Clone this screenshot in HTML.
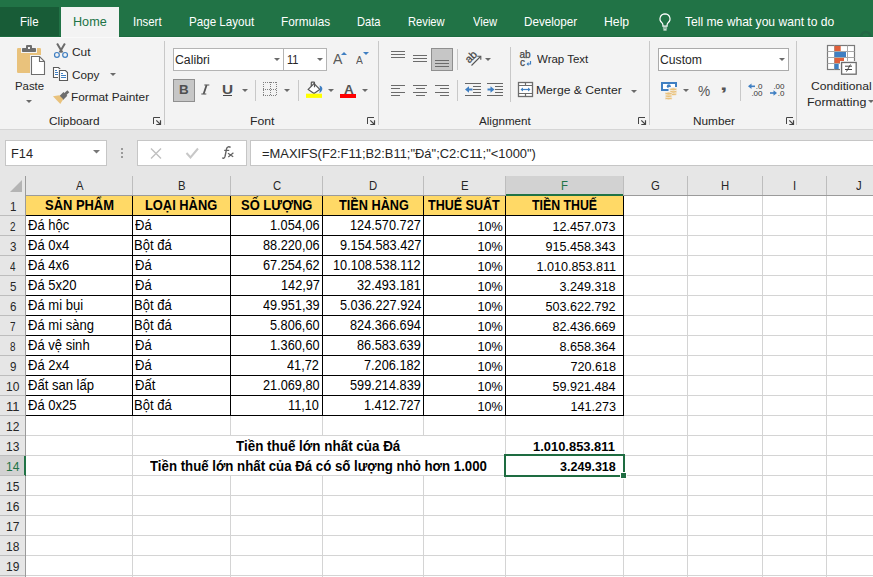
<!DOCTYPE html>
<html><head><meta charset="utf-8"><style>
html,body{margin:0;padding:0;}
body{width:873px;height:577px;overflow:hidden;position:relative;background:#fff;font-family:"Liberation Sans",sans-serif;}
body>div,body>svg{position:absolute;}
.t{white-space:nowrap;}
</style></head><body>
<div style="left:0px;top:0px;width:873px;height:37px;background:#217346"></div>
<div style="left:0px;top:36px;width:873px;height:1px;background:#1c6b40"></div>
<svg style="position:absolute;left:858px;top:28px" width="15" height="9" viewBox="0 0 15 9"><path d="M3.3 8.5A4.5 4.5 0 0 1 12.3 8.5" fill="none" stroke="#236745" stroke-width="2.6"/></svg>
<div style="left:0px;top:7px;width:59px;height:29px;background:#185c37"></div>
<div style="left:61px;top:7px;width:58px;height:30px;background:#f3f3f3"></div>
<div class="t" style="left:19.98px;top:16.29px;font-size:12.6px;line-height:12.6px;font-weight:400;color:#fff;transform-origin:0 0;transform:scaleX(0.9158);">File</div>
<div class="t" style="left:72.70px;top:16.29px;font-size:12.6px;line-height:12.6px;font-weight:400;color:#217346;transform-origin:0 0;transform:scaleX(1.0031);">Home</div>
<div class="t" style="left:132.79px;top:16.29px;font-size:12.6px;line-height:12.6px;font-weight:400;color:#fff;transform-origin:0 0;transform:scaleX(0.9065);">Insert</div>
<div class="t" style="left:188.58px;top:16.29px;font-size:12.6px;line-height:12.6px;font-weight:400;color:#fff;transform-origin:0 0;transform:scaleX(0.9214);">Page Layout</div>
<div class="t" style="left:281.06px;top:16.29px;font-size:12.6px;line-height:12.6px;font-weight:400;color:#fff;transform-origin:0 0;transform:scaleX(0.9353);">Formulas</div>
<div class="t" style="left:357.02px;top:16.29px;font-size:12.6px;line-height:12.6px;font-weight:400;color:#fff;transform-origin:0 0;transform:scaleX(0.8846);">Data</div>
<div class="t" style="left:408.01px;top:16.29px;font-size:12.6px;line-height:12.6px;font-weight:400;color:#fff;transform-origin:0 0;transform:scaleX(0.8878);">Review</div>
<div class="t" style="left:472.70px;top:16.29px;font-size:12.6px;line-height:12.6px;font-weight:400;color:#fff;transform-origin:0 0;transform:scaleX(0.8926);">View</div>
<div class="t" style="left:524.07px;top:16.29px;font-size:12.6px;line-height:12.6px;font-weight:400;color:#fff;transform-origin:0 0;transform:scaleX(0.9268);">Developer</div>
<div class="t" style="left:603.73px;top:16.29px;font-size:12.6px;line-height:12.6px;font-weight:400;color:#fff;transform-origin:0 0;transform:scaleX(0.9720);">Help</div>
<div class="t" style="left:685.00px;top:16.29px;font-size:12.6px;line-height:12.6px;font-weight:400;color:#fff;transform-origin:0 0;transform:scaleX(0.9606);">Tell me what you want to do</div>
<svg style="position:absolute;left:656px;top:11px" width="18" height="20" viewBox="0 0 18 20"><path d="M9 2.8a5 5 0 0 0-3.1 8.9c.7.6 1 1.3 1 2.2v1.3h4.2v-1.3c0-.9.3-1.6 1-2.2A5 5 0 0 0 9 2.8z" fill="none" stroke="#fff" stroke-width="1.2"/><path d="M6.9 17h4.2M7.4 18.8h3.2" stroke="#fff" stroke-width="1.2"/></svg>
<div style="left:0px;top:37px;width:873px;height:92px;background:#f3f3f3"></div>
<div style="left:0px;top:37px;width:873px;height:1px;background:#f9f9f9"></div>
<div style="left:0px;top:129px;width:873px;height:1px;background:#d5d5d5"></div>
<div style="left:164px;top:41px;width:1px;height:84px;background:#c8c8c8"></div>
<div style="left:378px;top:41px;width:1px;height:84px;background:#c8c8c8"></div>
<div style="left:649px;top:41px;width:1px;height:84px;background:#c8c8c8"></div>
<div style="left:796px;top:41px;width:1px;height:84px;background:#c8c8c8"></div>
<svg style="position:absolute;left:153px;top:117px" width="9" height="9" viewBox="0 0 9 9"><path d="M0.5 7V0.5H7" fill="none" stroke="#444" stroke-width="1"/><path d="M3.3 3.3L7 7" fill="none" stroke="#444" stroke-width="1.1"/><path d="M7.5 3.3V7.5H3.3" fill="none" stroke="#444" stroke-width="1.2"/></svg>
<svg style="position:absolute;left:367px;top:117px" width="9" height="9" viewBox="0 0 9 9"><path d="M0.5 7V0.5H7" fill="none" stroke="#444" stroke-width="1"/><path d="M3.3 3.3L7 7" fill="none" stroke="#444" stroke-width="1.1"/><path d="M7.5 3.3V7.5H3.3" fill="none" stroke="#444" stroke-width="1.2"/></svg>
<svg style="position:absolute;left:638px;top:117px" width="9" height="9" viewBox="0 0 9 9"><path d="M0.5 7V0.5H7" fill="none" stroke="#444" stroke-width="1"/><path d="M3.3 3.3L7 7" fill="none" stroke="#444" stroke-width="1.1"/><path d="M7.5 3.3V7.5H3.3" fill="none" stroke="#444" stroke-width="1.2"/></svg>
<svg style="position:absolute;left:786px;top:117px" width="9" height="9" viewBox="0 0 9 9"><path d="M0.5 7V0.5H7" fill="none" stroke="#444" stroke-width="1"/><path d="M3.3 3.3L7 7" fill="none" stroke="#444" stroke-width="1.1"/><path d="M7.5 3.3V7.5H3.3" fill="none" stroke="#444" stroke-width="1.2"/></svg>
<div class="t" style="left:48.60px;top:115.14px;font-size:11.6px;line-height:11.6px;font-weight:400;color:#262626;transform-origin:0 0;transform:scaleX(1.0204);">Clipboard</div>
<div class="t" style="left:250.35px;top:115.14px;font-size:11.6px;line-height:11.6px;font-weight:400;color:#262626;transform-origin:0 0;transform:scaleX(1.0545);">Font</div>
<div class="t" style="left:479.00px;top:115.14px;font-size:11.6px;line-height:11.6px;font-weight:400;color:#262626;transform-origin:0 0;transform:scaleX(1.0038);">Alignment</div>
<div class="t" style="left:692.98px;top:115.14px;font-size:11.6px;line-height:11.6px;font-weight:400;color:#262626;transform-origin:0 0;transform:scaleX(1.0200);">Number</div>
<svg style="position:absolute;left:14px;top:42px" width="34" height="36" viewBox="0 0 34 36">
<rect x="3" y="6" width="24" height="25" rx="1.2" fill="#e9c27c"/>
<rect x="7" y="5" width="16" height="6" fill="#f3f3f3"/>
<rect x="8" y="6" width="14" height="4" rx="0.8" fill="#6d6d6d"/>
<rect x="12" y="3" width="6" height="4" rx="1" fill="#6d6d6d"/>
<rect x="14" y="5" width="2" height="2" fill="#f3f3f3"/>
<rect x="16" y="13" width="16" height="21" fill="#f3f3f3"/>
<path d="M17.5 14.5H25.5L30.5 19.5V32.5H17.5Z" fill="#fff" stroke="#6d6d6d" stroke-width="1.1"/>
<path d="M25.5 14.5V19.5H30.5" fill="none" stroke="#6d6d6d" stroke-width="1.1"/>
</svg>
<div class="t" style="left:14.52px;top:80.14px;font-size:11.6px;line-height:11.6px;font-weight:400;color:#262626;transform-origin:0 0;transform:scaleX(0.9821);">Paste</div>
<svg style="position:absolute;left:26px;top:100px" width="6" height="4" viewBox="0 0 6 4"><path d="M0 0h6L3.0 3.0z" fill="#6a6a6a"/></svg>
<svg style="position:absolute;left:52px;top:42px" width="18" height="17" viewBox="0 0 18 17">
<path d="M5.1 1.4L10.4 10.6M12.9 1.4L7.6 10.6" stroke="#6b6b6b" stroke-width="2"/>
<circle cx="4.9" cy="12.9" r="2.4" fill="none" stroke="#3f7fc2" stroke-width="1.2"/>
<circle cx="13.1" cy="12.9" r="2.4" fill="none" stroke="#3f7fc2" stroke-width="1.2"/>
</svg>
<div class="t" style="left:72.40px;top:46.14px;font-size:11.6px;line-height:11.6px;font-weight:400;color:#262626;transform-origin:0 0;transform:scaleX(1.0278);">Cut</div>
<svg style="position:absolute;left:52px;top:66px" width="18" height="16" viewBox="0 0 18 16">
<path d="M1.5 1.5H6.5L8 3V11.5H1.5Z" fill="#fff" stroke="#5a5a5a" stroke-width="1.1"/>
<rect x="6" y="3" width="11" height="13" fill="#f3f3f3"/>
<path d="M7.5 4.5H13.5L15.5 6.5V14.5H7.5Z" fill="#fff" stroke="#5a5a5a" stroke-width="1.1"/>
<path d="M3 4.5H5M3 6.5H6M3 8.5H6M9 7.5H11M9 9.5H14M9 11.5H14" stroke="#3f7fc2" stroke-width="1"/>
</svg>
<div class="t" style="left:72.40px;top:69.14px;font-size:11.6px;line-height:11.6px;font-weight:400;color:#262626;transform-origin:0 0;transform:scaleX(1.0111);">Copy</div>
<svg style="position:absolute;left:110px;top:73px" width="6" height="4" viewBox="0 0 6 4"><path d="M0 0h6L3.0 3.0z" fill="#6a6a6a"/></svg>
<svg style="position:absolute;left:52px;top:88px" width="18" height="17" viewBox="0 0 18 17">
<path d="M12 5.5L15.3 2.2L17.3 4.2L14 7.5z" fill="#6d6d6d"/>
<path d="M7 8.5L11.5 4L15.3 7.8L10.8 12.3z" fill="#6d6d6d"/>
<path d="M1 8.3L7.3 7.3L11.2 11.2L8.3 16z" fill="#e9c27c"/>
</svg>
<div class="t" style="left:71.38px;top:91.14px;font-size:11.6px;line-height:11.6px;font-weight:400;color:#262626;transform-origin:0 0;transform:scaleX(1.0184);">Format Painter</div>
<div style="left:173px;top:48px;width:111px;height:23px;background:#fff;border:1px solid #b4b4b4;box-sizing:border-box"></div>
<div style="left:283px;top:48px;width:44px;height:23px;background:#fff;border:1px solid #b4b4b4;box-sizing:border-box"></div>
<div class="t" style="left:175.42px;top:53.88px;font-size:12.5px;line-height:12.5px;font-weight:400;color:#262626;transform-origin:0 0;transform:scaleX(0.9824);">Calibri</div>
<div class="t" style="left:286.82px;top:53.88px;font-size:12.5px;line-height:12.5px;font-weight:400;color:#262626;transform-origin:0 0;transform:scaleX(0.8833);">11</div>
<svg style="position:absolute;left:274px;top:58px" width="6" height="4" viewBox="0 0 6 4"><path d="M0 0h6L3.0 3.0z" fill="#6a6a6a"/></svg>
<svg style="position:absolute;left:317px;top:58px" width="6" height="4" viewBox="0 0 6 4"><path d="M0 0h6L3.0 3.0z" fill="#6a6a6a"/></svg>
<div class="t" style="left:333.10px;top:52.87px;font-size:13.8px;line-height:13.8px;font-weight:400;color:#595959;transform-origin:0 0;transform:scaleX(1.0222);">A</div>
<svg style="position:absolute;left:341px;top:52px" width="6" height="3" viewBox="0 0 6 3"><path d="M0 3h6L3 0z" fill="#3f7fc2"/></svg>
<div class="t" style="left:356.30px;top:55.76px;font-size:10.4px;line-height:10.4px;font-weight:400;color:#595959;transform-origin:0 0;transform:scaleX(0.9857);">A</div>
<svg style="position:absolute;left:363px;top:52px" width="6" height="3" viewBox="0 0 6 3"><path d="M0 0h6L3 3z" fill="#3f7fc2"/></svg>
<div style="left:173px;top:79px;width:22px;height:23px;background:#c6c6c6;border:1px solid #8f8f8f;box-sizing:border-box"></div>
<div class="t" style="left:178.60px;top:83.83px;font-size:12.2px;line-height:12.2px;font-weight:700;color:#505050;transform-origin:0 0;transform:scaleX(1.1000);">B</div>
<svg style="position:absolute;left:200px;top:84px" width="11" height="11" viewBox="0 0 11 11"><path d="M6.6 1L3.6 10" stroke="#555" stroke-width="1.8"/><path d="M4.3 1H9.3M1.3 10H6.3" stroke="#555" stroke-width="1.2"/></svg>
<div class="t" style="left:221.74px;top:83.83px;font-size:12.2px;line-height:12.2px;font-weight:700;color:#505050;transform-origin:0 0;transform:scaleX(1.2571);">U</div>
<div style="left:223px;top:95px;width:9px;height:1px;background:#474747"></div>
<svg style="position:absolute;left:242px;top:89px" width="6" height="4" viewBox="0 0 6 4"><path d="M0 0h6L3.0 3.0z" fill="#6a6a6a"/></svg>
<div style="left:255px;top:80px;width:1px;height:21px;background:#c8c8c8"></div>
<svg style="position:absolute;left:263px;top:82px" width="15" height="15" viewBox="0 0 15 15"><path d="M0 0.5H14M0 13.5H14M0 7.5H14M0.5 0V14M13.5 0V14M7.5 0V14" stroke="#808080" stroke-width="1" stroke-dasharray="1 1"/></svg>
<svg style="position:absolute;left:284px;top:89px" width="6" height="4" viewBox="0 0 6 4"><path d="M0 0h6L3.0 3.0z" fill="#6a6a6a"/></svg>
<div style="left:298px;top:80px;width:1px;height:21px;background:#c8c8c8"></div>
<svg style="position:absolute;left:306px;top:81px" width="18" height="17" viewBox="0 0 18 17">
<path d="M2.2 8.4L8 2.5L13.8 8.4L8 12.6Z" fill="#fff" stroke="#555" stroke-width="1.2"/>
<path d="M5.3 5.3V1.8Q5.3 1.2 5.9 1.2H7.9Q8.5 1.2 8.5 1.8V6.3" fill="none" stroke="#555" stroke-width="1.2"/>
<path d="M13.6 4.6Q17 6.2 16.2 8.8Q15.4 11 13.4 12.2Q14.4 8.5 13.6 4.6Z" fill="#3f7fc2"/>
<rect x="0" y="12.7" width="16" height="4.2" fill="#ffff00"/>
</svg>
<svg style="position:absolute;left:328px;top:89px" width="6" height="4" viewBox="0 0 6 4"><path d="M0 0h6L3.0 3.0z" fill="#6a6a6a"/></svg>
<div class="t" style="left:343.90px;top:82.61px;font-size:13.4px;line-height:13.4px;font-weight:700;color:#555;transform-origin:0 0;transform:scaleX(1.0111);">A</div>
<div style="left:340px;top:94px;width:16px;height:4px;background:#ff0000"></div>
<svg style="position:absolute;left:362px;top:89px" width="6" height="4" viewBox="0 0 6 4"><path d="M0 0h6L3.0 3.0z" fill="#6a6a6a"/></svg>
<div style="left:391px;top:51px;width:14px;height:1px;background:#6b6b6b"></div>
<div style="left:391px;top:54px;width:14px;height:1px;background:#6b6b6b"></div>
<div style="left:391px;top:57px;width:14px;height:1px;background:#6b6b6b"></div>
<div style="left:413px;top:55px;width:14px;height:1px;background:#6b6b6b"></div>
<div style="left:413px;top:58px;width:14px;height:1px;background:#6b6b6b"></div>
<div style="left:413px;top:61px;width:14px;height:1px;background:#6b6b6b"></div>
<div style="left:431px;top:48px;width:22px;height:23px;background:#c6c6c6;border:1px solid #8f8f8f;box-sizing:border-box"></div>
<div style="left:435px;top:60px;width:14px;height:1px;background:#6b6b6b"></div>
<div style="left:435px;top:63px;width:14px;height:1px;background:#6b6b6b"></div>
<div style="left:435px;top:66px;width:14px;height:1px;background:#6b6b6b"></div>
<div style="left:457px;top:49px;width:1px;height:21px;background:#c8c8c8"></div>
<svg style="position:absolute;left:463px;top:49px" width="20" height="19" viewBox="0 0 20 19">
<text x="8" y="11.5" text-anchor="middle" font-family="Liberation Sans" font-size="11" fill="#444" stroke="#444" stroke-width="0.25" transform="rotate(-45 8 8)">ab</text>
<path d="M8.5 16.5L17.5 7.5" stroke="#555" stroke-width="1.1"/>
<path d="M14.2 7.2H17.8V10.8" stroke="#555" stroke-width="1.1" fill="none"/>
</svg>
<svg style="position:absolute;left:485px;top:58px" width="6" height="4" viewBox="0 0 6 4"><path d="M0 0h6L3.0 3.0z" fill="#6a6a6a"/></svg>
<div style="left:391px;top:85px;width:14px;height:1px;background:#6b6b6b"></div>
<div style="left:391px;top:88px;width:9px;height:1px;background:#6b6b6b"></div>
<div style="left:391px;top:92px;width:14px;height:1px;background:#6b6b6b"></div>
<div style="left:391px;top:95px;width:9px;height:1px;background:#6b6b6b"></div>
<div style="left:413.0px;top:85px;width:14px;height:1px;background:#6b6b6b"></div>
<div style="left:415.5px;top:88px;width:9px;height:1px;background:#6b6b6b"></div>
<div style="left:413.0px;top:92px;width:14px;height:1px;background:#6b6b6b"></div>
<div style="left:415.5px;top:95px;width:9px;height:1px;background:#6b6b6b"></div>
<div style="left:435px;top:85px;width:14px;height:1px;background:#6b6b6b"></div>
<div style="left:440px;top:88px;width:9px;height:1px;background:#6b6b6b"></div>
<div style="left:435px;top:92px;width:14px;height:1px;background:#6b6b6b"></div>
<div style="left:440px;top:95px;width:9px;height:1px;background:#6b6b6b"></div>
<div style="left:457px;top:80px;width:1px;height:21px;background:#c8c8c8"></div>
<svg style="position:absolute;left:464px;top:82px" width="18" height="16" viewBox="0 0 18 16">
<path d="M1 1.5H17M9 4.5H17M9 7.5H17M9 10.5H17M1 13.5H17" stroke="#666" stroke-width="1"/>
<path d="M4 7.5H8.5" stroke="#3f7fc2" stroke-width="2"/><path d="M1 7.5L5 4.2V10.8Z" fill="#3f7fc2"/>
</svg>
<svg style="position:absolute;left:486px;top:82px" width="18" height="16" viewBox="0 0 18 16">
<path d="M1 1.5H17M9 4.5H17M9 7.5H17M9 10.5H17M1 13.5H17" stroke="#666" stroke-width="1"/>
<path d="M1.5 7.5H5" stroke="#3f7fc2" stroke-width="2"/><path d="M8.5 7.5L4.5 4.2V10.8Z" fill="#3f7fc2"/>
</svg>
<div style="left:510px;top:47px;width:1px;height:55px;background:#c8c8c8"></div>
<svg style="position:absolute;left:518px;top:49px" width="16" height="18" viewBox="0 0 16 18">
<text x="1.5" y="9" font-family="Liberation Sans" font-size="10" fill="#444" stroke="#444" stroke-width="0.25">ab</text>
<text x="2" y="16.5" font-family="Liberation Sans" font-size="10" fill="#444" stroke="#444" stroke-width="0.25">c</text>
<path d="M12.5 12V15H9.5" stroke="#3f7fc2" stroke-width="1.2" fill="none"/><path d="M8.5 15L10.5 13V17Z" fill="#3f7fc2"/>
</svg>
<div class="t" style="left:537.30px;top:53.14px;font-size:11.6px;line-height:11.6px;font-weight:400;color:#262626;transform-origin:0 0;transform:scaleX(0.9904);">Wrap Text</div>
<svg style="position:absolute;left:517px;top:81px" width="17" height="17" viewBox="0 0 17 17">
<rect x="1.5" y="1.5" width="14" height="14" fill="#fff" stroke="#6d6d6d" stroke-width="1.3"/>
<path d="M1.5 4.5H15.5M1.5 12.5H15.5M8.5 1.5V4.5M8.5 12.5V15.5" stroke="#6d6d6d" stroke-width="1.2"/>
<path d="M4 8.5H13" stroke="#3f7fc2" stroke-width="1.2"/><path d="M3.5 8.5L6 6.5V10.5ZM13.5 8.5L11 6.5V10.5Z" fill="#3f7fc2"/>
</svg>
<div class="t" style="left:535.95px;top:84.14px;font-size:11.6px;line-height:11.6px;font-weight:400;color:#262626;transform-origin:0 0;transform:scaleX(1.0469);">Merge &amp; Center</div>
<svg style="position:absolute;left:631px;top:90px" width="6" height="4" viewBox="0 0 6 4"><path d="M0 0h6L3.0 3.0z" fill="#6a6a6a"/></svg>
<div style="left:658px;top:48px;width:131px;height:23px;background:#fff;border:1px solid #ababab;box-sizing:border-box"></div>
<div class="t" style="left:660.43px;top:53.88px;font-size:12.5px;line-height:12.5px;font-weight:400;color:#262626;transform-origin:0 0;transform:scaleX(0.9738);">Custom</div>
<svg style="position:absolute;left:779px;top:58px" width="6" height="4" viewBox="0 0 6 4"><path d="M0 0h6L3.0 3.0z" fill="#6a6a6a"/></svg>
<svg style="position:absolute;left:660px;top:81px" width="20" height="19" viewBox="0 0 20 19">
<rect x="2" y="2" width="14" height="7" fill="#fff" stroke="#3f7fc2" stroke-width="2"/>
<circle cx="8.8" cy="5.3" r="2" fill="#3f7fc2"/>
<rect x="8.5" y="6" width="10" height="13" fill="#f3f3f3"/>
<rect x="4" y="11" width="9" height="8" fill="#f3f3f3"/>
<g stroke="#f3f3f3" stroke-width="0.7" fill="#eac27c">
<ellipse cx="13.3" cy="13.1" rx="3.6" ry="1.5"/>
<ellipse cx="13.3" cy="10.7" rx="3.6" ry="1.5"/>
<ellipse cx="13.3" cy="8.3" rx="3.6" ry="1.5"/>
<ellipse cx="8.6" cy="17.3" rx="3.6" ry="1.5"/>
<ellipse cx="8.6" cy="15" rx="3.6" ry="1.5"/>
<ellipse cx="8.6" cy="12.6" rx="3.6" ry="1.5"/>
</g>
</svg>
<svg style="position:absolute;left:683px;top:89px" width="6" height="4" viewBox="0 0 6 4"><path d="M0 0h6L3.0 3.0z" fill="#6a6a6a"/></svg>
<div class="t" style="left:697.70px;top:83.25px;font-size:15px;line-height:15px;font-weight:400;color:#555;transform-origin:0 0;transform:scaleX(0.9154);">%</div>
<div class="t" style="left:720.33px;top:76.9px;font-size:16px;line-height:16px;font-weight:700;color:#555;transform-origin:0 0;transform:scaleX(1.6667);">,</div>
<div style="left:740px;top:80px;width:1px;height:21px;background:#c8c8c8"></div>
<svg style="position:absolute;left:746px;top:80px" width="40" height="18" viewBox="0 0 40 18">
<path d="M3.5 6.3H9" stroke="#3f7fc2" stroke-width="1.6"/><path d="M2 6.3L5.5 3.6V9Z" fill="#3f7fc2"/>
<text x="16.5" y="8.8" text-anchor="end" font-family="Liberation Sans" font-size="8" fill="#333">.0</text>
<text x="16.5" y="16" text-anchor="end" font-family="Liberation Sans" font-size="8" fill="#333">.00</text>
<text x="38.5" y="8.8" text-anchor="end" font-family="Liberation Sans" font-size="8" fill="#333">.00</text>
<path d="M24 13H29" stroke="#3f7fc2" stroke-width="1.6"/><path d="M31 13L27.5 10.3V15.7Z" fill="#3f7fc2"/>
<text x="38.5" y="16" text-anchor="end" font-family="Liberation Sans" font-size="8" fill="#333">.0</text>
</svg>
<svg style="position:absolute;left:826px;top:44px" width="32" height="32" viewBox="0 0 32 32">
<rect x="1.5" y="1.5" width="27" height="24" fill="#fff" stroke="#7a7a7a" stroke-width="1.2"/>
<path d="M8.5 1.5V25.5M21.5 1.5V25.5M1.5 7.5H28.5M1.5 13.5H28.5M1.5 19.5H28.5" stroke="#a8a8a8" stroke-width="1"/>
<rect x="8.5" y="2" width="6.2" height="5" fill="#e0603b"/>
<rect x="8.5" y="8" width="11.5" height="5" fill="#3f7fc2"/>
<rect x="8.5" y="14" width="9.5" height="5" fill="#e0603b"/>
<rect x="8.5" y="20" width="4.2" height="5" fill="#3f7fc2"/>
<rect x="14" y="17" width="18" height="15" fill="#f3f3f3"/>
<rect x="15.6" y="18.5" width="14.6" height="11.7" fill="#fff" stroke="#6d6d6d" stroke-width="1.3"/>
<path d="M19 22.2H26M19 25.5H26M20.5 27.5L24.5 20.5" stroke="#444" stroke-width="1"/>
</svg>
<div class="t" style="left:810.60px;top:80.14px;font-size:11.6px;line-height:11.6px;font-weight:400;color:#262626;transform-origin:0 0;transform:scaleX(1.0448);">Conditional</div>
<div class="t" style="left:806.63px;top:96.14px;font-size:11.6px;line-height:11.6px;font-weight:400;color:#262626;transform-origin:0 0;transform:scaleX(1.0704);">Formatting</div>
<svg style="position:absolute;left:868px;top:100px" width="6" height="4" viewBox="0 0 6 4"><path d="M0 0h6L3.0 3.0z" fill="#6a6a6a"/></svg>
<div style="left:0px;top:130px;width:873px;height:46px;background:#e6e6e6"></div>
<div style="left:5px;top:140px;width:102px;height:26px;background:#fff;border:1px solid #c6c6c6;box-sizing:border-box"></div>
<div class="t" style="left:11.48px;top:147.68px;font-size:12.5px;line-height:12.5px;font-weight:400;color:#262626;transform-origin:0 0;transform:scaleX(1.0200);">F14</div>
<svg style="position:absolute;left:93px;top:150px" width="7" height="4" viewBox="0 0 7 4"><path d="M0 0h7L3.5 3.5z" fill="#777"/></svg>
<div style="left:121px;top:148px;width:2px;height:2px;background:#9a9a9a"></div>
<div style="left:121px;top:152px;width:2px;height:2px;background:#9a9a9a"></div>
<div style="left:121px;top:156px;width:2px;height:2px;background:#9a9a9a"></div>
<div style="left:137px;top:140px;width:110px;height:26px;background:#fff;border:1px solid #c6c6c6;box-sizing:border-box"></div>
<svg style="position:absolute;left:150px;top:148px" width="12" height="11" viewBox="0 0 12 11"><path d="M1 0.5l10 10M11 0.5L1 10.5" stroke="#c0c0c0" stroke-width="1.4"/></svg>
<svg style="position:absolute;left:185px;top:147px" width="14" height="12" viewBox="0 0 14 12"><path d="M1.5 6l4 4.5 7.5-9" stroke="#c8c8c8" stroke-width="2" fill="none"/></svg>
<svg style="position:absolute;left:220px;top:145px" width="16" height="15" viewBox="0 0 16 15"><path d="M2.3 12.6C3.3 13.8 4.6 13.2 5.1 11.2L6.6 3.6C7.1 1.6 9.1 1.4 10.6 2.4" fill="none" stroke="#626262" stroke-width="1.4"/><path d="M4.2 5.4H9.2" stroke="#626262" stroke-width="1.2"/><path d="M8 8.2L13.2 11.8M13.4 7.8L8.3 12" stroke="#626262" stroke-width="1.2"/></svg>
<div style="left:250px;top:140px;width:630px;height:26px;background:#fff;border:1px solid #c6c6c6;box-sizing:border-box"></div>
<div class="t" style="left:262.40px;top:147.59px;font-size:12.6px;line-height:12.6px;font-weight:400;color:#262626;transform-origin:0 0;transform:scaleX(1.0255);">=MAXIFS(F2:F11;B2:B11;"Đá";C2:C11;"&lt;1000")</div>
<div style="left:0px;top:176px;width:873px;height:401px;background:#fff"></div>
<div style="left:0px;top:176px;width:873px;height:20px;background:#e6e6e6"></div>
<div style="left:0px;top:176px;width:26px;height:401px;background:#e6e6e6"></div>
<div style="left:506px;top:176px;width:117px;height:19px;background:#d2d2d2"></div>
<div style="left:25px;top:195px;width:848px;height:1px;background:#9b9b9b"></div>
<div style="left:25px;top:176px;width:1px;height:401px;background:#9b9b9b"></div>
<div style="left:132px;top:176px;width:1px;height:19px;background:#bdbdbd"></div>
<div style="left:230px;top:176px;width:1px;height:19px;background:#bdbdbd"></div>
<div style="left:322px;top:176px;width:1px;height:19px;background:#bdbdbd"></div>
<div style="left:423px;top:176px;width:1px;height:19px;background:#bdbdbd"></div>
<div style="left:505px;top:176px;width:1px;height:19px;background:#bdbdbd"></div>
<div style="left:623px;top:176px;width:1px;height:19px;background:#bdbdbd"></div>
<div style="left:687px;top:176px;width:1px;height:19px;background:#bdbdbd"></div>
<div style="left:762px;top:176px;width:1px;height:19px;background:#bdbdbd"></div>
<div style="left:826px;top:176px;width:1px;height:19px;background:#bdbdbd"></div>
<div style="left:506px;top:194px;width:117px;height:2px;background:#217346"></div>
<svg style="position:absolute;left:10px;top:180px" width="13" height="12" viewBox="0 0 13 12"><path d="M12 0V12H0z" fill="#b4b4b4"/></svg>
<div class="t" style="left:75.80px;top:179.89px;font-size:12.6px;line-height:12.6px;font-weight:400;color:#262626;transform-origin:0 0;transform:scaleX(0.9000);">A</div>
<div class="t" style="left:177.85px;top:179.89px;font-size:12.6px;line-height:12.6px;font-weight:400;color:#262626;transform-origin:0 0;transform:scaleX(0.9000);">B</div>
<div class="t" style="left:272.85px;top:179.89px;font-size:12.6px;line-height:12.6px;font-weight:400;color:#262626;transform-origin:0 0;transform:scaleX(0.9000);">C</div>
<div class="t" style="left:368.90px;top:179.89px;font-size:12.6px;line-height:12.6px;font-weight:400;color:#262626;transform-origin:0 0;transform:scaleX(0.9000);">D</div>
<div class="t" style="left:460.85px;top:179.89px;font-size:12.6px;line-height:12.6px;font-weight:400;color:#262626;transform-origin:0 0;transform:scaleX(0.9000);">E</div>
<div class="t" style="left:561.30px;top:179.89px;font-size:12.6px;line-height:12.6px;font-weight:400;color:#217346;transform-origin:0 0;transform:scaleX(0.9000);">F</div>
<div class="t" style="left:651.40px;top:179.89px;font-size:12.6px;line-height:12.6px;font-weight:400;color:#262626;transform-origin:0 0;transform:scaleX(0.9000);">G</div>
<div class="t" style="left:721.35px;top:179.89px;font-size:12.6px;line-height:12.6px;font-weight:400;color:#262626;transform-origin:0 0;transform:scaleX(0.9000);">H</div>
<div class="t" style="left:793.10px;top:179.89px;font-size:12.6px;line-height:12.6px;font-weight:400;color:#262626;transform-origin:0 0;transform:scaleX(0.9000);">I</div>
<div class="t" style="left:856.20px;top:179.89px;font-size:12.6px;line-height:12.6px;font-weight:400;color:#262626;transform-origin:0 0;transform:scaleX(0.9000);">J</div>
<div style="left:0px;top:215px;width:25px;height:1px;background:#bdbdbd"></div>
<div class="t" style="left:9.53px;top:200.79px;font-size:12.6px;line-height:12.6px;font-weight:400;color:#262626;transform-origin:0 0;transform:scaleX(0.9167);">1</div>
<div style="left:0px;top:235px;width:25px;height:1px;background:#bdbdbd"></div>
<div class="t" style="left:10.45px;top:220.79px;font-size:12.6px;line-height:12.6px;font-weight:400;color:#262626;transform-origin:0 0;transform:scaleX(0.7857);">2</div>
<div style="left:0px;top:255px;width:25px;height:1px;background:#bdbdbd"></div>
<div class="t" style="left:9.53px;top:240.79px;font-size:12.6px;line-height:12.6px;font-weight:400;color:#262626;transform-origin:0 0;transform:scaleX(0.9167);">3</div>
<div style="left:0px;top:275px;width:25px;height:1px;background:#bdbdbd"></div>
<div class="t" style="left:10.45px;top:260.79px;font-size:12.6px;line-height:12.6px;font-weight:400;color:#262626;transform-origin:0 0;transform:scaleX(0.7857);">4</div>
<div style="left:0px;top:295px;width:25px;height:1px;background:#bdbdbd"></div>
<div class="t" style="left:9.53px;top:280.79px;font-size:12.6px;line-height:12.6px;font-weight:400;color:#262626;transform-origin:0 0;transform:scaleX(0.9167);">5</div>
<div style="left:0px;top:315px;width:25px;height:1px;background:#bdbdbd"></div>
<div class="t" style="left:9.53px;top:300.79px;font-size:12.6px;line-height:12.6px;font-weight:400;color:#262626;transform-origin:0 0;transform:scaleX(0.9167);">6</div>
<div style="left:0px;top:335px;width:25px;height:1px;background:#bdbdbd"></div>
<div class="t" style="left:10.45px;top:320.79px;font-size:12.6px;line-height:12.6px;font-weight:400;color:#262626;transform-origin:0 0;transform:scaleX(0.7857);">7</div>
<div style="left:0px;top:355px;width:25px;height:1px;background:#bdbdbd"></div>
<div class="t" style="left:10.45px;top:340.79px;font-size:12.6px;line-height:12.6px;font-weight:400;color:#262626;transform-origin:0 0;transform:scaleX(0.7857);">8</div>
<div style="left:0px;top:375px;width:25px;height:1px;background:#bdbdbd"></div>
<div class="t" style="left:9.53px;top:360.79px;font-size:12.6px;line-height:12.6px;font-weight:400;color:#262626;transform-origin:0 0;transform:scaleX(0.9167);">9</div>
<div style="left:0px;top:395px;width:25px;height:1px;background:#bdbdbd"></div>
<div class="t" style="left:6.05px;top:380.79px;font-size:12.6px;line-height:12.6px;font-weight:400;color:#262626;transform-origin:0 0;transform:scaleX(0.9538);">10</div>
<div style="left:0px;top:415px;width:25px;height:1px;background:#bdbdbd"></div>
<div class="t" style="left:5.97px;top:400.79px;font-size:12.6px;line-height:12.6px;font-weight:400;color:#262626;transform-origin:0 0;transform:scaleX(1.0333);">11</div>
<div style="left:0px;top:435px;width:25px;height:1px;background:#bdbdbd"></div>
<div class="t" style="left:6.05px;top:420.79px;font-size:12.6px;line-height:12.6px;font-weight:400;color:#262626;transform-origin:0 0;transform:scaleX(0.9538);">12</div>
<div style="left:0px;top:455px;width:25px;height:1px;background:#bdbdbd"></div>
<div class="t" style="left:6.05px;top:440.79px;font-size:12.6px;line-height:12.6px;font-weight:400;color:#262626;transform-origin:0 0;transform:scaleX(0.9538);">13</div>
<div style="left:0px;top:456px;width:25px;height:19px;background:#d2d2d2"></div>
<div style="left:24px;top:456px;width:2px;height:20px;background:#217346"></div>
<div style="left:0px;top:475px;width:25px;height:1px;background:#bdbdbd"></div>
<div class="t" style="left:6.05px;top:460.79px;font-size:12.6px;line-height:12.6px;font-weight:400;color:#217346;transform-origin:0 0;transform:scaleX(0.9538);">14</div>
<div style="left:0px;top:495px;width:25px;height:1px;background:#bdbdbd"></div>
<div class="t" style="left:6.05px;top:480.79px;font-size:12.6px;line-height:12.6px;font-weight:400;color:#262626;transform-origin:0 0;transform:scaleX(0.9538);">15</div>
<div style="left:0px;top:515px;width:25px;height:1px;background:#bdbdbd"></div>
<div class="t" style="left:6.05px;top:500.79px;font-size:12.6px;line-height:12.6px;font-weight:400;color:#262626;transform-origin:0 0;transform:scaleX(0.9538);">16</div>
<div style="left:0px;top:535px;width:25px;height:1px;background:#bdbdbd"></div>
<div class="t" style="left:6.05px;top:520.79px;font-size:12.6px;line-height:12.6px;font-weight:400;color:#262626;transform-origin:0 0;transform:scaleX(0.9538);">17</div>
<div style="left:0px;top:555px;width:25px;height:1px;background:#bdbdbd"></div>
<div class="t" style="left:6.05px;top:540.79px;font-size:12.6px;line-height:12.6px;font-weight:400;color:#262626;transform-origin:0 0;transform:scaleX(0.9538);">18</div>
<div style="left:0px;top:575px;width:25px;height:1px;background:#bdbdbd"></div>
<div class="t" style="left:6.05px;top:560.79px;font-size:12.6px;line-height:12.6px;font-weight:400;color:#262626;transform-origin:0 0;transform:scaleX(0.9538);">19</div>
<div style="left:26px;top:215px;width:847px;height:1px;background:#d4d4d4"></div>
<div style="left:26px;top:235px;width:847px;height:1px;background:#d4d4d4"></div>
<div style="left:26px;top:255px;width:847px;height:1px;background:#d4d4d4"></div>
<div style="left:26px;top:275px;width:847px;height:1px;background:#d4d4d4"></div>
<div style="left:26px;top:295px;width:847px;height:1px;background:#d4d4d4"></div>
<div style="left:26px;top:315px;width:847px;height:1px;background:#d4d4d4"></div>
<div style="left:26px;top:335px;width:847px;height:1px;background:#d4d4d4"></div>
<div style="left:26px;top:355px;width:847px;height:1px;background:#d4d4d4"></div>
<div style="left:26px;top:375px;width:847px;height:1px;background:#d4d4d4"></div>
<div style="left:26px;top:395px;width:847px;height:1px;background:#d4d4d4"></div>
<div style="left:26px;top:415px;width:847px;height:1px;background:#d4d4d4"></div>
<div style="left:26px;top:435px;width:847px;height:1px;background:#d4d4d4"></div>
<div style="left:26px;top:455px;width:847px;height:1px;background:#d4d4d4"></div>
<div style="left:26px;top:475px;width:847px;height:1px;background:#d4d4d4"></div>
<div style="left:26px;top:495px;width:847px;height:1px;background:#d4d4d4"></div>
<div style="left:26px;top:515px;width:847px;height:1px;background:#d4d4d4"></div>
<div style="left:26px;top:535px;width:847px;height:1px;background:#d4d4d4"></div>
<div style="left:26px;top:555px;width:847px;height:1px;background:#d4d4d4"></div>
<div style="left:26px;top:575px;width:847px;height:1px;background:#d4d4d4"></div>
<div style="left:132px;top:196px;width:1px;height:381px;background:#d4d4d4"></div>
<div style="left:230px;top:196px;width:1px;height:381px;background:#d4d4d4"></div>
<div style="left:322px;top:196px;width:1px;height:381px;background:#d4d4d4"></div>
<div style="left:423px;top:196px;width:1px;height:381px;background:#d4d4d4"></div>
<div style="left:505px;top:196px;width:1px;height:381px;background:#d4d4d4"></div>
<div style="left:623px;top:196px;width:1px;height:381px;background:#d4d4d4"></div>
<div style="left:687px;top:196px;width:1px;height:381px;background:#d4d4d4"></div>
<div style="left:762px;top:196px;width:1px;height:381px;background:#d4d4d4"></div>
<div style="left:826px;top:196px;width:1px;height:381px;background:#d4d4d4"></div>
<div style="left:133px;top:436px;width:372px;height:19px;background:#fff"></div>
<div style="left:133px;top:456px;width:372px;height:19px;background:#fff"></div>
<div style="left:26px;top:196px;width:597px;height:19px;background:#ffd966"></div>
<div style="left:26px;top:215px;width:598px;height:1px;background:#000"></div>
<div style="left:26px;top:235px;width:598px;height:1px;background:#000"></div>
<div style="left:26px;top:255px;width:598px;height:1px;background:#000"></div>
<div style="left:26px;top:275px;width:598px;height:1px;background:#000"></div>
<div style="left:26px;top:295px;width:598px;height:1px;background:#000"></div>
<div style="left:26px;top:315px;width:598px;height:1px;background:#000"></div>
<div style="left:26px;top:335px;width:598px;height:1px;background:#000"></div>
<div style="left:26px;top:355px;width:598px;height:1px;background:#000"></div>
<div style="left:26px;top:375px;width:598px;height:1px;background:#000"></div>
<div style="left:26px;top:395px;width:598px;height:1px;background:#000"></div>
<div style="left:26px;top:415px;width:598px;height:1px;background:#000"></div>
<div style="left:132px;top:196px;width:1px;height:220px;background:#000"></div>
<div style="left:230px;top:196px;width:1px;height:220px;background:#000"></div>
<div style="left:322px;top:196px;width:1px;height:220px;background:#000"></div>
<div style="left:423px;top:196px;width:1px;height:220px;background:#000"></div>
<div style="left:505px;top:196px;width:1px;height:220px;background:#000"></div>
<div style="left:623px;top:196px;width:1px;height:220px;background:#000"></div>
<div class="t" style="left:44.61px;top:197.68px;font-size:14.5px;line-height:14.5px;font-weight:700;color:#000;transform-origin:0 0;transform:scaleX(0.8921);">SẢN PHẨM</div>
<div class="t" style="left:144.71px;top:197.68px;font-size:14.5px;line-height:14.5px;font-weight:700;color:#000;transform-origin:0 0;transform:scaleX(0.8875);">LOẠI HÀNG</div>
<div class="t" style="left:240.91px;top:197.68px;font-size:14.5px;line-height:14.5px;font-weight:700;color:#000;transform-origin:0 0;transform:scaleX(0.8923);">SỐ LƯỢNG</div>
<div class="t" style="left:338.50px;top:197.68px;font-size:14.5px;line-height:14.5px;font-weight:700;color:#000;transform-origin:0 0;transform:scaleX(0.8759);">TIỀN HÀNG</div>
<div class="t" style="left:428.30px;top:197.68px;font-size:14.5px;line-height:14.5px;font-weight:700;color:#000;transform-origin:0 0;transform:scaleX(0.8639);">THUẾ SUẤT</div>
<div class="t" style="left:532.40px;top:197.68px;font-size:14.5px;line-height:14.5px;font-weight:700;color:#000;transform-origin:0 0;transform:scaleX(0.8500);">TIỀN THUẾ</div>
<div class="t" style="left:27.80px;top:218.1px;font-size:14px;line-height:14px;font-weight:400;color:#000;transform-origin:0 0;transform:scaleX(0.9318);">Đá hộc</div>
<div class="t" style="left:135.40px;top:218.1px;font-size:14px;line-height:14px;font-weight:400;color:#000;transform-origin:0 0;transform:scaleX(0.9318);">Đá</div>
<div class="t" style="left:270.10px;top:218.1px;font-size:14px;line-height:14px;font-weight:400;color:#000;transform-origin:0 0;transform:scaleX(0.9092);">1.054,06</div>
<div class="t" style="left:350.49px;top:218.1px;font-size:14px;line-height:14px;font-weight:400;color:#000;transform-origin:0 0;transform:scaleX(0.9092);">124.570.727</div>
<div class="t" style="left:477.60px;top:220.79px;font-size:12.6px;line-height:12.6px;font-weight:400;color:#000;transform-origin:0 0;">10%</div>
<div class="t" style="left:552.40px;top:220.79px;font-size:12.6px;line-height:12.6px;font-weight:400;color:#000;transform-origin:0 0;">12.457.073</div>
<div class="t" style="left:27.80px;top:238.1px;font-size:14px;line-height:14px;font-weight:400;color:#000;transform-origin:0 0;transform:scaleX(0.9318);">Đá 0x4</div>
<div class="t" style="left:134.47px;top:238.1px;font-size:14px;line-height:14px;font-weight:400;color:#000;transform-origin:0 0;transform:scaleX(0.9318);">Bột đá</div>
<div class="t" style="left:262.83px;top:238.1px;font-size:14px;line-height:14px;font-weight:400;color:#000;transform-origin:0 0;transform:scaleX(0.9092);">88.220,06</div>
<div class="t" style="left:339.58px;top:238.1px;font-size:14px;line-height:14px;font-weight:400;color:#000;transform-origin:0 0;transform:scaleX(0.9092);">9.154.583.427</div>
<div class="t" style="left:477.60px;top:240.79px;font-size:12.6px;line-height:12.6px;font-weight:400;color:#000;transform-origin:0 0;">10%</div>
<div class="t" style="left:545.40px;top:240.79px;font-size:12.6px;line-height:12.6px;font-weight:400;color:#000;transform-origin:0 0;">915.458.343</div>
<div class="t" style="left:27.80px;top:258.1px;font-size:14px;line-height:14px;font-weight:400;color:#000;transform-origin:0 0;transform:scaleX(0.9318);">Đá 4x6</div>
<div class="t" style="left:135.40px;top:258.1px;font-size:14px;line-height:14px;font-weight:400;color:#000;transform-origin:0 0;transform:scaleX(0.9318);">Đá</div>
<div class="t" style="left:262.83px;top:258.1px;font-size:14px;line-height:14px;font-weight:400;color:#000;transform-origin:0 0;transform:scaleX(0.9092);">67.254,62</div>
<div class="t" style="left:333.22px;top:258.1px;font-size:14px;line-height:14px;font-weight:400;color:#000;transform-origin:0 0;transform:scaleX(0.9092);">10.108.538.112</div>
<div class="t" style="left:477.60px;top:260.79px;font-size:12.6px;line-height:12.6px;font-weight:400;color:#000;transform-origin:0 0;">10%</div>
<div class="t" style="left:536.40px;top:260.79px;font-size:12.6px;line-height:12.6px;font-weight:400;color:#000;transform-origin:0 0;">1.010.853.811</div>
<div class="t" style="left:27.80px;top:278.1px;font-size:14px;line-height:14px;font-weight:400;color:#000;transform-origin:0 0;transform:scaleX(0.9318);">Đá 5x20</div>
<div class="t" style="left:135.40px;top:278.1px;font-size:14px;line-height:14px;font-weight:400;color:#000;transform-origin:0 0;transform:scaleX(0.9318);">Đá</div>
<div class="t" style="left:281.01px;top:278.1px;font-size:14px;line-height:14px;font-weight:400;color:#000;transform-origin:0 0;transform:scaleX(0.9092);">142,97</div>
<div class="t" style="left:356.86px;top:278.1px;font-size:14px;line-height:14px;font-weight:400;color:#000;transform-origin:0 0;transform:scaleX(0.9092);">32.493.181</div>
<div class="t" style="left:477.60px;top:280.79px;font-size:12.6px;line-height:12.6px;font-weight:400;color:#000;transform-origin:0 0;">10%</div>
<div class="t" style="left:559.40px;top:280.79px;font-size:12.6px;line-height:12.6px;font-weight:400;color:#000;transform-origin:0 0;">3.249.318</div>
<div class="t" style="left:27.80px;top:298.1px;font-size:14px;line-height:14px;font-weight:400;color:#000;transform-origin:0 0;transform:scaleX(0.9318);">Đá mi bụi</div>
<div class="t" style="left:134.47px;top:298.1px;font-size:14px;line-height:14px;font-weight:400;color:#000;transform-origin:0 0;transform:scaleX(0.9318);">Bột đá</div>
<div class="t" style="left:262.83px;top:298.1px;font-size:14px;line-height:14px;font-weight:400;color:#000;transform-origin:0 0;transform:scaleX(0.9092);">49.951,39</div>
<div class="t" style="left:339.58px;top:298.1px;font-size:14px;line-height:14px;font-weight:400;color:#000;transform-origin:0 0;transform:scaleX(0.9092);">5.036.227.924</div>
<div class="t" style="left:477.60px;top:300.79px;font-size:12.6px;line-height:12.6px;font-weight:400;color:#000;transform-origin:0 0;">10%</div>
<div class="t" style="left:545.40px;top:300.79px;font-size:12.6px;line-height:12.6px;font-weight:400;color:#000;transform-origin:0 0;">503.622.792</div>
<div class="t" style="left:27.80px;top:318.1px;font-size:14px;line-height:14px;font-weight:400;color:#000;transform-origin:0 0;transform:scaleX(0.9318);">Đá mi sàng</div>
<div class="t" style="left:134.47px;top:318.1px;font-size:14px;line-height:14px;font-weight:400;color:#000;transform-origin:0 0;transform:scaleX(0.9318);">Bột đá</div>
<div class="t" style="left:270.10px;top:318.1px;font-size:14px;line-height:14px;font-weight:400;color:#000;transform-origin:0 0;transform:scaleX(0.9092);">5.806,60</div>
<div class="t" style="left:349.58px;top:318.1px;font-size:14px;line-height:14px;font-weight:400;color:#000;transform-origin:0 0;transform:scaleX(0.9092);">824.366.694</div>
<div class="t" style="left:477.60px;top:320.79px;font-size:12.6px;line-height:12.6px;font-weight:400;color:#000;transform-origin:0 0;">10%</div>
<div class="t" style="left:552.40px;top:320.79px;font-size:12.6px;line-height:12.6px;font-weight:400;color:#000;transform-origin:0 0;">82.436.669</div>
<div class="t" style="left:27.80px;top:338.1px;font-size:14px;line-height:14px;font-weight:400;color:#000;transform-origin:0 0;transform:scaleX(0.9318);">Đá vệ sinh</div>
<div class="t" style="left:135.40px;top:338.1px;font-size:14px;line-height:14px;font-weight:400;color:#000;transform-origin:0 0;transform:scaleX(0.9318);">Đá</div>
<div class="t" style="left:270.10px;top:338.1px;font-size:14px;line-height:14px;font-weight:400;color:#000;transform-origin:0 0;transform:scaleX(0.9092);">1.360,60</div>
<div class="t" style="left:356.86px;top:338.1px;font-size:14px;line-height:14px;font-weight:400;color:#000;transform-origin:0 0;transform:scaleX(0.9092);">86.583.639</div>
<div class="t" style="left:477.60px;top:340.79px;font-size:12.6px;line-height:12.6px;font-weight:400;color:#000;transform-origin:0 0;">10%</div>
<div class="t" style="left:559.40px;top:340.79px;font-size:12.6px;line-height:12.6px;font-weight:400;color:#000;transform-origin:0 0;">8.658.364</div>
<div class="t" style="left:27.80px;top:358.1px;font-size:14px;line-height:14px;font-weight:400;color:#000;transform-origin:0 0;transform:scaleX(0.9318);">Đá 2x4</div>
<div class="t" style="left:135.40px;top:358.1px;font-size:14px;line-height:14px;font-weight:400;color:#000;transform-origin:0 0;transform:scaleX(0.9318);">Đá</div>
<div class="t" style="left:287.38px;top:358.1px;font-size:14px;line-height:14px;font-weight:400;color:#000;transform-origin:0 0;transform:scaleX(0.9092);">41,72</div>
<div class="t" style="left:364.13px;top:358.1px;font-size:14px;line-height:14px;font-weight:400;color:#000;transform-origin:0 0;transform:scaleX(0.9092);">7.206.182</div>
<div class="t" style="left:477.60px;top:360.79px;font-size:12.6px;line-height:12.6px;font-weight:400;color:#000;transform-origin:0 0;">10%</div>
<div class="t" style="left:570.40px;top:360.79px;font-size:12.6px;line-height:12.6px;font-weight:400;color:#000;transform-origin:0 0;">720.618</div>
<div class="t" style="left:27.80px;top:378.1px;font-size:14px;line-height:14px;font-weight:400;color:#000;transform-origin:0 0;transform:scaleX(0.9318);">Đất san lấp</div>
<div class="t" style="left:135.40px;top:378.1px;font-size:14px;line-height:14px;font-weight:400;color:#000;transform-origin:0 0;transform:scaleX(0.9318);">Đất</div>
<div class="t" style="left:262.83px;top:378.1px;font-size:14px;line-height:14px;font-weight:400;color:#000;transform-origin:0 0;transform:scaleX(0.9092);">21.069,80</div>
<div class="t" style="left:350.49px;top:378.1px;font-size:14px;line-height:14px;font-weight:400;color:#000;transform-origin:0 0;transform:scaleX(0.9092);">599.214.839</div>
<div class="t" style="left:477.60px;top:380.79px;font-size:12.6px;line-height:12.6px;font-weight:400;color:#000;transform-origin:0 0;">10%</div>
<div class="t" style="left:552.40px;top:380.79px;font-size:12.6px;line-height:12.6px;font-weight:400;color:#000;transform-origin:0 0;">59.921.484</div>
<div class="t" style="left:27.80px;top:398.1px;font-size:14px;line-height:14px;font-weight:400;color:#000;transform-origin:0 0;transform:scaleX(0.9318);">Đá 0x25</div>
<div class="t" style="left:134.47px;top:398.1px;font-size:14px;line-height:14px;font-weight:400;color:#000;transform-origin:0 0;transform:scaleX(0.9318);">Bột đá</div>
<div class="t" style="left:288.29px;top:398.1px;font-size:14px;line-height:14px;font-weight:400;color:#000;transform-origin:0 0;transform:scaleX(0.9092);">11,10</div>
<div class="t" style="left:364.13px;top:398.1px;font-size:14px;line-height:14px;font-weight:400;color:#000;transform-origin:0 0;transform:scaleX(0.9092);">1.412.727</div>
<div class="t" style="left:477.60px;top:400.79px;font-size:12.6px;line-height:12.6px;font-weight:400;color:#000;transform-origin:0 0;">10%</div>
<div class="t" style="left:570.40px;top:400.79px;font-size:12.6px;line-height:12.6px;font-weight:400;color:#000;transform-origin:0 0;">141.273</div>
<div class="t" style="left:236.20px;top:438.85px;font-size:14.3px;line-height:14.3px;font-weight:700;color:#000;transform-origin:0 0;transform:scaleX(0.9383);">Tiền thuế lớn nhất của Đá</div>
<div class="t" style="left:150.20px;top:458.85px;font-size:14.3px;line-height:14.3px;font-weight:700;color:#000;transform-origin:0 0;transform:scaleX(0.9258);">Tiền thuế lớn nhất của Đá có số lượng nhỏ hơn 1.000</div>
<div class="t" style="left:533.27px;top:441.29px;font-size:12.6px;line-height:12.6px;font-weight:700;color:#000;transform-origin:0 0;transform:scaleX(1.0266);">1.010.853.811</div>
<div class="t" style="left:559.60px;top:461.29px;font-size:12.6px;line-height:12.6px;font-weight:700;color:#000;transform-origin:0 0;transform:scaleX(0.9964);">3.249.318</div>
<div style="left:504px;top:454px;width:121px;height:23px;border:2px solid #1e6c41;box-sizing:border-box"></div>
<div style="left:620px;top:472px;width:7px;height:7px;background:#1e6c41;border:1px solid #fff;box-sizing:border-box"></div>
</body></html>
